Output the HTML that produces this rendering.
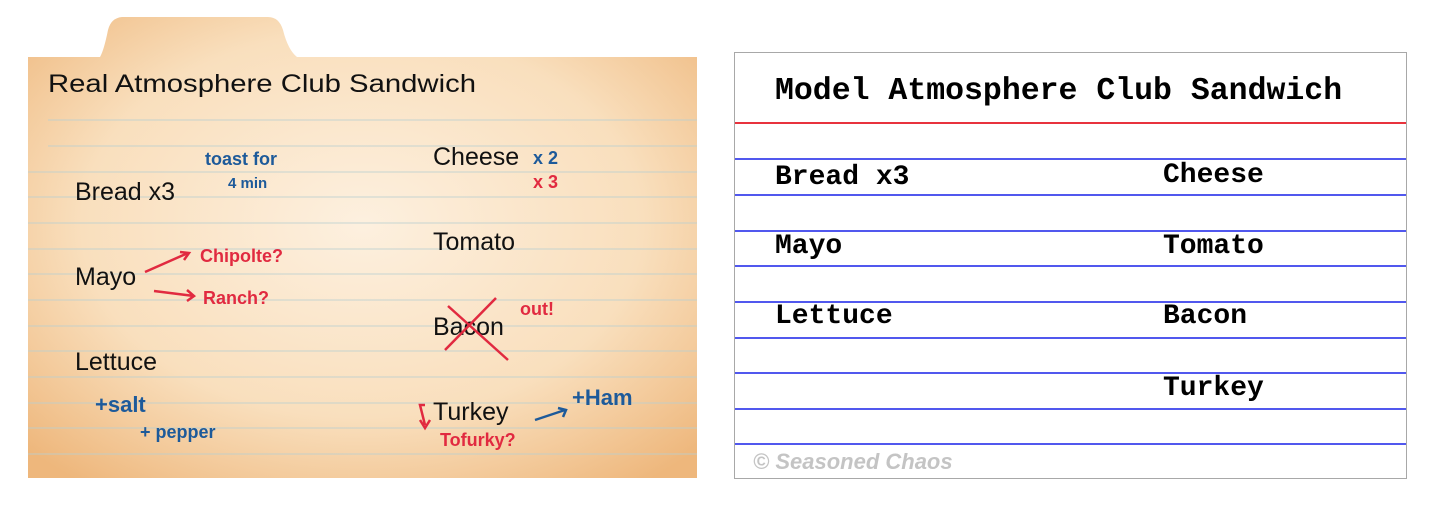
<!DOCTYPE html>
<html><head><meta charset="utf-8"><style>
html,body{margin:0;padding:0;background:#fff;width:1440px;height:514px;overflow:hidden}
.r{position:absolute;left:734px;top:52px;width:671px;height:425px;border:1px solid #a8a8a8;background:#fff}
.l{position:absolute;left:0;right:0;height:2px}
.t{position:absolute;font-family:"Liberation Mono",monospace;font-weight:bold;color:#000;font-size:28px;line-height:1}
</style></head><body>
<svg width="720" height="514" style="position:absolute;left:0;top:0" xmlns="http://www.w3.org/2000/svg">
<defs>
<radialGradient id="g" cx="0.5" cy="0.45" r="0.7">
<stop offset="0" stop-color="#fdf0df"/><stop offset="0.6" stop-color="#f9dfbd"/><stop offset="1" stop-color="#eeb77c"/>
</radialGradient>
</defs>
<path d="M28 57 L100 57 Q104 50 108 30 Q111 18 122 17 L268 17 Q279 17 283 30 Q288 50 297 57 L697 57 L697 478 L28 478 Z" fill="url(#g)"/>
<g stroke="#b9cfd0" stroke-width="1" opacity="0.8">
<line x1="48" y1="120" x2="697" y2="120"/><line x1="48" y1="146" x2="697" y2="146"/>
<line x1="28" y1="172" x2="697" y2="172"/><line x1="28" y1="197" x2="697" y2="197"/>
<line x1="28" y1="223" x2="697" y2="223"/><line x1="28" y1="249" x2="697" y2="249"/>
<line x1="28" y1="274" x2="697" y2="274"/><line x1="28" y1="300" x2="697" y2="300"/>
<line x1="28" y1="326" x2="697" y2="326"/><line x1="28" y1="351" x2="697" y2="351"/>
<line x1="28" y1="377" x2="697" y2="377"/><line x1="28" y1="403" x2="697" y2="403"/>
<line x1="28" y1="428" x2="697" y2="428"/><line x1="28" y1="454" x2="697" y2="454"/>
</g>
<g font-family="Liberation Sans, sans-serif" fill="#111" font-size="25">
<text x="48" y="92" textLength="428" lengthAdjust="spacingAndGlyphs">Real Atmosphere Club Sandwich</text>
<text x="75" y="200">Bread x3</text>
<text x="75" y="285">Mayo</text>
<text x="75" y="370">Lettuce</text>
<text x="433" y="165">Cheese</text>
<text x="433" y="250">Tomato</text>
<text x="433" y="335">Bacon</text>
<text x="433" y="420">Turkey</text>
</g>
<g font-family="Liberation Sans, sans-serif" fill="#1d5a9a" font-size="18" font-weight="bold">
<text x="205" y="165">toast for</text><text x="228" y="188" font-size="15">4 min</text>
<text x="533" y="164">x 2</text>
<text x="95" y="412" font-size="22">+salt</text><text x="140" y="438">+ pepper</text>
<text x="572" y="405" font-size="22">+Ham</text>
</g>
<g font-family="Liberation Sans, sans-serif" fill="#e12a40" font-size="18" font-weight="bold">
<text x="533" y="188">x 3</text>
<text x="200" y="262">Chipolte?</text><text x="203" y="304">Ranch?</text>
<text x="520" y="315">out!</text>
<text x="440" y="446">Tofurky?</text>
</g>
<g stroke="#e12a40" stroke-width="2.5" fill="none">
<path d="M145 272 L188 253 M180 252 L189 253 L184 260"/>
<path d="M154 291 L194 296 M187 290 L194 296 L187 301"/>
<path d="M448 306 L508 360 M445 350 L496 298"/>
<path d="M425 405 L420 405 L425 425 M420 420 L425 428 L430 420"/>
</g>
<path d="M535 420 L565 410 M558 408 L566 410 L563 417" stroke="#1d5a9a" stroke-width="2.5" fill="none"/>
</svg>
<div class="r">
<div class="l" style="top:69px;background:#e8333d"></div>
<div class="l" style="top:105px;background:#5158ee"></div>
<div class="l" style="top:141px;background:#5158ee"></div>
<div class="l" style="top:177px;background:#5158ee"></div>
<div class="l" style="top:212px;background:#5158ee"></div>
<div class="l" style="top:248px;background:#5158ee"></div>
<div class="l" style="top:284px;background:#5158ee"></div>
<div class="l" style="top:319px;background:#5158ee"></div>
<div class="l" style="top:355px;background:#5158ee"></div>
<div class="l" style="top:390px;background:#5158ee"></div>
<div class="t" style="left:40px;top:23px;font-size:31.5px">Model Atmosphere Club Sandwich</div>
<div class="t" style="left:40px;top:111px">Bread x3</div>
<div class="t" style="left:428px;top:109px">Cheese</div>
<div class="t" style="left:40px;top:180px">Mayo</div>
<div class="t" style="left:428px;top:180px">Tomato</div>
<div class="t" style="left:40px;top:250px">Lettuce</div>
<div class="t" style="left:428px;top:250px">Bacon</div>
<div class="t" style="left:428px;top:322px">Turkey</div>
<div style="position:absolute;left:18px;top:396px;font-family:'Liberation Sans',sans-serif;font-style:italic;font-weight:bold;font-size:22px;color:#c4c4c4">© Seasoned Chaos</div>
</div>
</body></html>
